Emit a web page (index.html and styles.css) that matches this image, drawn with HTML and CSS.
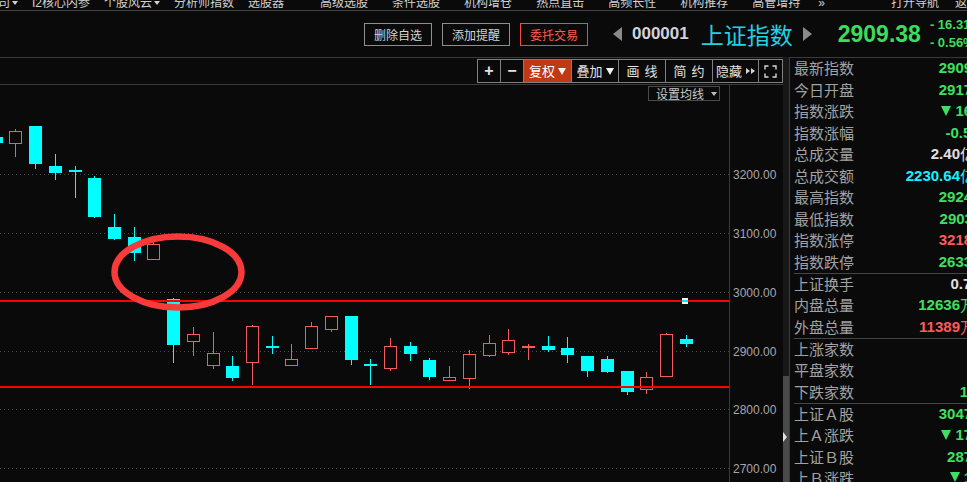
FILE: index.html
```html
<!DOCTYPE html>
<html lang="zh">
<head>
<meta charset="utf-8">
<title>上证指数</title>
<link rel="stylesheet" href="styles.css">
</head>
<body>
<div class="app">
  <nav class="nav">
    <div class="nav-g g1">
      <span class="ni">司<i class="dd"></i></span>
      <span class="ni">I2核心内参</span>
      <span class="ni">个股风云<i class="dd"></i></span>
      <span class="ni">分析师指数</span>
      <span class="ni">选股器</span>
    </div>
    <div class="nav-g g2">
      <span class="ni">高级选股</span>
      <span class="ni">条件选股</span>
      <span class="ni">机构增仓</span>
      <span class="ni">热点直击</span>
      <span class="ni">高频长性</span>
      <span class="ni">机构推荐</span>
      <span class="ni">高管增持</span>
    </div>
    <div class="nav-g more"><span class="ni">»</span></div>
    <div class="nav-g g3">
      <span class="ni">打开导航</span>
      <span class="ni">返回</span>
    </div>
  </nav>

  <header class="quote">
    <div class="btns">
      <button type="button" class="btn">删除自选</button>
      <button type="button" class="btn">添加提醒</button>
      <button type="button" class="btn red">委托交易</button>
    </div>
    <span class="arr l"></span>
    <span class="code">000001</span>
    <span class="name">上证指数</span>
    <span class="arr r"></span>
    <span class="price">2909.38</span>
    <div class="chg">
      <div>- 16.31</div>
      <div>- 0.56%</div>
    </div>
  </header>

  <div class="main">
    <section class="left">
      <div class="toolrow">
        <div class="tools">
          <span class="tc w22 sym">+</span>
          <span class="tc w22 sym">−</span>
          <span class="tc w47 on">复权<i class="tri"></i></span>
          <span class="tc w46">叠加<i class="tri"></i></span>
          <span class="tc w46 sp">画 线</span>
          <span class="tc w46 sp">简 约</span>
          <span class="tc w45">隐藏<i class="rt"></i><i class="rt"></i></span>
          <span class="tc w23">
            <svg width="13" height="13" viewBox="0 0 13 13" fill="none" stroke="#d6d6d6" stroke-width="1.4"><path d="M1 4.5V1h3.5M8.5 1H12v3.5M12 8.5V12H8.5M4.5 12H1V8.5"/></svg>
          </span>
        </div>
      </div>
      <div class="chart">
        <svg class="plot" width="783" height="397" viewBox="0 85 783 397">
          <g stroke="#4a4a4a" stroke-dasharray="1 3" shape-rendering="crispEdges">
            <line x1="0" y1="174.5" x2="729" y2="174.5"/>
            <line x1="0" y1="233.5" x2="729" y2="233.5"/>
            <line x1="0" y1="292.5" x2="729" y2="292.5"/>
            <line x1="0" y1="351.5" x2="729" y2="351.5"/>
            <line x1="0" y1="409.5" x2="729" y2="409.5"/>
            <line x1="0" y1="468.5" x2="729" y2="468.5"/>
          </g>
          <line x1="729.5" y1="85" x2="729.5" y2="482" stroke="#3a3a3a"/>
          <g font-family="Liberation Sans, Arial, sans-serif" font-size="12" fill="#a6a6ae">
            <text x="733" y="179">3200.00</text>
            <text x="733" y="238">3100.00</text>
            <text x="733" y="297">3000.00</text>
            <text x="733" y="356">2900.00</text>
            <text x="733" y="414">2800.00</text>
            <text x="733" y="473">2700.00</text>
          </g>
          <g fill="#00ffff" shape-rendering="crispEdges">
            <rect x="-10" y="137" width="13" height="6"/>
            <rect x="35" y="126" width="1" height="43"/><rect x="29" y="126" width="13" height="38"/>
            <rect x="55" y="154" width="1" height="26"/><rect x="49" y="166" width="13" height="7"/>
            <rect x="75" y="166" width="1" height="32"/><rect x="69" y="170" width="13" height="2"/>
            <rect x="94" y="176" width="1" height="42"/><rect x="88" y="178" width="13" height="39"/>
            <rect x="114" y="214" width="1" height="26"/><rect x="108" y="227" width="13" height="12"/>
            <rect x="134" y="227" width="1" height="34"/><rect x="128" y="237" width="13" height="16"/>
            <rect x="173" y="298" width="1" height="65"/><rect x="167" y="299" width="13" height="46"/>
            <rect x="232" y="356" width="1" height="25"/><rect x="226" y="366" width="13" height="12"/>
            <rect x="272" y="336" width="1" height="18"/><rect x="266" y="346" width="13" height="2"/>
            <rect x="351" y="316" width="1" height="49"/><rect x="345" y="316" width="13" height="44"/>
            <rect x="370" y="359" width="1" height="26"/><rect x="364" y="364" width="13" height="2"/>
            <rect x="410" y="342" width="1" height="19"/><rect x="404" y="346" width="13" height="8"/>
            <rect x="429" y="358" width="1" height="22"/><rect x="423" y="360" width="13" height="17"/>
            <rect x="548" y="336" width="1" height="16"/><rect x="542" y="346" width="13" height="4"/>
            <rect x="567" y="337" width="1" height="26"/><rect x="561" y="348" width="13" height="7"/>
            <rect x="587" y="356" width="1" height="21"/><rect x="581" y="356" width="13" height="15"/>
            <rect x="607" y="356" width="1" height="17"/><rect x="601" y="359" width="13" height="13"/>
            <rect x="627" y="371" width="1" height="24"/><rect x="621" y="371" width="13" height="21"/>
            <rect x="686" y="335" width="1" height="12"/><rect x="680" y="339" width="13" height="5"/>
          </g>
          <g fill="#f25c5c" shape-rendering="crispEdges">
            <rect x="15" y="129" width="1" height="28"/>
            <rect x="153" y="241" width="1" height="19"/>
            <rect x="193" y="327" width="1" height="29"/>
            <rect x="213" y="332" width="1" height="37"/>
            <rect x="252" y="325" width="1" height="60"/>
            <rect x="291" y="344" width="1" height="22"/>
            <rect x="311" y="322" width="1" height="27"/>
            <rect x="331" y="316" width="1" height="16"/>
            <rect x="390" y="338" width="1" height="33"/>
            <rect x="449" y="366" width="1" height="15"/>
            <rect x="469" y="350" width="1" height="39"/>
            <rect x="489" y="335" width="1" height="22"/>
            <rect x="508" y="329" width="1" height="26"/>
            <rect x="528" y="344" width="1" height="16"/><rect x="522" y="346" width="13" height="2"/>
            <rect x="646" y="372" width="1" height="22"/>
            <rect x="666" y="333" width="1" height="44"/>
          </g>
          <g fill="#0a0a0a" stroke="#f25c5c" stroke-width="1">
            <rect x="9.5" y="131.5" width="12" height="12"/>
            <rect x="147.5" y="244.5" width="12" height="15"/>
            <rect x="187.5" y="334.5" width="12" height="7"/>
            <rect x="207.5" y="353.5" width="12" height="12"/>
            <rect x="246.5" y="326.5" width="12" height="36"/>
            <rect x="285.5" y="359.5" width="12" height="6"/>
            <rect x="305.5" y="326.5" width="12" height="22"/>
            <rect x="325.5" y="316.5" width="12" height="13"/>
            <rect x="384.5" y="346.5" width="12" height="22"/>
            <rect x="443.5" y="377.5" width="12" height="3"/>
            <rect x="463.5" y="354.5" width="12" height="24"/>
            <rect x="483.5" y="343.5" width="12" height="12"/>
            <rect x="502.5" y="340.5" width="12" height="12"/>
            <rect x="640.5" y="377.5" width="12" height="12"/>
            <rect x="660.5" y="334.5" width="12" height="42"/>
          </g>
          <g fill="#ff0000" shape-rendering="crispEdges">
            <rect x="0" y="300" width="729" height="2"/>
            <rect x="0" y="386" width="729" height="2"/>
          </g>
          <rect x="682" y="298" width="6" height="6" fill="#f4f4f4" shape-rendering="crispEdges"/>
          <rect x="682" y="300" width="6" height="2" fill="#00e8ff" shape-rendering="crispEdges"/>
          <ellipse cx="178" cy="272" rx="63.5" ry="35.5" fill="none" stroke="#f83a3a" stroke-width="6.5"/>
        </svg>
        <div class="ma">设置均线<i></i></div>
      </div>
    </section>

    <div class="scroll"><div class="thumb"><i></i></div></div>

    <aside class="panel">
      <div class="grp">
        <div class="row"><span class="lb">最新指数</span><span class="v gr">2909.38</span></div>
        <div class="row"><span class="lb">今日开盘</span><span class="v gr">2917.23</span></div>
        <div class="row"><span class="lb">指数涨跌</span><span class="v gr"><i class="dn"></i>16.31</span></div>
        <div class="row"><span class="lb">指数涨幅</span><span class="v gr">-0.56%</span></div>
        <div class="row"><span class="lb">总成交量</span><span class="v wh unit">2.40<span class="u">亿</span></span></div>
        <div class="row"><span class="lb">总成交额</span><span class="v cy unit">2230.64<span class="u">亿</span></span></div>
        <div class="row"><span class="lb">最高指数</span><span class="v gr">2924.12</span></div>
        <div class="row"><span class="lb">最低指数</span><span class="v gr">2903.11</span></div>
        <div class="row"><span class="lb">指数涨停</span><span class="v rd">3218.26</span></div>
        <div class="row"><span class="lb">指数跌停</span><span class="v gr">2633.12</span></div>
      </div>
      <div class="grp s">
        <div class="row"><span class="lb">上证换手</span><span class="v wh">0.73%</span></div>
        <div class="row"><span class="lb">内盘总量</span><span class="v gr unit">12636<span class="u">万</span></span></div>
        <div class="row"><span class="lb">外盘总量</span><span class="v rd unit">11389<span class="u">万</span></span></div>
      </div>
      <div class="grp s">
        <div class="row"><span class="lb">上涨家数</span><span class="v rd">478</span></div>
        <div class="row"><span class="lb">平盘家数</span><span class="v wh">62</span></div>
        <div class="row"><span class="lb">下跌家数</span><span class="v gr">1532</span></div>
      </div>
      <div class="grp s last">
        <div class="row"><span class="lb">上证Ａ股</span><span class="v gr">3047.68</span></div>
        <div class="row"><span class="lb">上Ａ涨跌</span><span class="v gr"><i class="dn"></i>17.09</span></div>
        <div class="row"><span class="lb">上证Ｂ股</span><span class="v gr">287.92</span></div>
        <div class="row"><span class="lb">上Ｂ涨跌</span><span class="v gr"><i class="dn"></i>1.35</span></div>
      </div>
    </aside>
  </div>
</div>
</body>
</html>
```
FILE: styles.css
```css
* { box-sizing: border-box; margin: 0; padding: 0; }
html, body { width: 967px; height: 482px; overflow: hidden; background: #0a0a0a; }
body {
  font-family: "Noto Sans CJK SC", "Liberation Sans", sans-serif;
  color: #cccccc;
}
.app { width: 967px; height: 482px; overflow: hidden; }

/* top navigation (clipped at the top) */
.nav {
  height: 11px;
  border-bottom: 1px solid #454545;
  display: flex;
  overflow: hidden;
  white-space: nowrap;
  font-family: "Liberation Sans", "Noto Sans CJK SC", sans-serif;
  font-size: 12px;
  line-height: 12px;
  color: #d2d2d2;
}
.nav-g { display: flex; margin-top: -4px; flex: none; }
.g1 { gap: 14px; margin-left: -2px; }
.g2 { gap: 24px; margin-left: 36px; }
.more { margin-left: 18px; }
.g3 { gap: 16px; margin-left: 66px; }
.ni { display: flex; align-items: center; }
.dd {
  display: inline-block;
  margin-left: 2px;
  border-left: 3px solid transparent;
  border-right: 3px solid transparent;
  border-top: 4px solid #d2d2d2;
}

/* quote header */
.quote {
  height: 46px;
  display: flex;
  align-items: center;
  padding-left: 364px;
  white-space: nowrap;
}
.btns { display: flex; gap: 10px; flex: none; }
.btn {
  width: 68px;
  height: 23px;
  border: 1px solid #8e8e8e;
  background: transparent;
  color: #d4d4d4;
  font-family: "Noto Sans CJK SC", sans-serif;
  font-size: 12px;
  line-height: 21px;
  text-align: center;
}
.btn.red { border-color: #f04a44; color: #ff5a4e; }
.arr { flex: none; width: 0; height: 0; border-top: 7px solid transparent; border-bottom: 7px solid transparent; }
.arr.l { border-right: 9px solid #8a8a8a; margin-left: 25px; }
.arr.r { border-left: 9px solid #8a8a8a; margin-left: 10px; }
.code {
  margin-left: 10px;
  font-family: "Liberation Sans", sans-serif;
  font-weight: bold;
  font-size: 17px;
  color: #d2d2da;
}
.name { margin-left: 12px; font-size: 23px; line-height: 30px; color: #1fd3e4; }
.price {
  margin-left: 26px;
  font-family: "Liberation Sans", sans-serif;
  font-weight: bold;
  font-size: 23px;
  color: #3cdc5c;
}
.chg {
  margin-left: 9px;
  font-family: "Liberation Sans", sans-serif;
  font-weight: bold;
  font-size: 13px;
  line-height: 18px;
  color: #3cdc5c;
}

/* main area */
.main { display: flex; height: 425px; }
.left {
  width: 783px;
  flex: none;
  border-top: 1px solid #3a3a3a;
  display: flex;
  flex-direction: column;
}
.toolrow {
  height: 27px;
  border-bottom: 1px solid #3a3a3a;
  display: flex;
  justify-content: flex-end;
  align-items: flex-start;
  padding-top: 1px;
}
.tools {
  display: flex;
  height: 24px;
  border: 1px solid #808080;
}
.tc {
  display: flex;
  align-items: center;
  justify-content: center;
  height: 22px;
  border-left: 1px solid #808080;
  font-size: 13px;
  line-height: 22px;
  color: #e2e2e2;
  white-space: nowrap;
}
.tc:first-child { border-left: 0; }
.w22 { width: 22px; }
.tc.w22 + .tc.w22 { width: 23px; }
.w47 { width: 48px; }
.w46 { width: 47px; }
.w45 { width: 46px; }
.w23 { width: 24px; }
.sym { font-family: "Liberation Sans", sans-serif; font-weight: bold; font-size: 16px; }
.sp { word-spacing: 2px; }
.on { background: #c03814; color: #ffffff; }
.tri {
  display: inline-block;
  margin-left: 3px;
  border-left: 4px solid transparent;
  border-right: 4px solid transparent;
  border-top: 7px solid #f2f2f2;
}
.rt {
  display: inline-block;
  border-top: 3.5px solid transparent;
  border-bottom: 3.5px solid transparent;
  border-left: 4px solid #d6d6d6;
}
.rt:first-of-type { margin-left: 4px; margin-right: 1px; }

.chart { position: relative; flex: 1; overflow: hidden; }
.plot { display: block; }
.ma {
  position: absolute;
  left: 648px;
  top: 1px;
  width: 72px;
  height: 15px;
  border: 1px solid #4a4a4a;
  padding-left: 7px;
  font-size: 12px;
  line-height: 13px;
  color: #cacaca;
  display: flex;
  align-items: center;
  white-space: nowrap;
}
.ma i {
  display: inline-block;
  margin-left: 7px;
  border-left: 3px solid transparent;
  border-right: 3px solid transparent;
  border-top: 4px solid #bdbdbd;
}

/* scrollbar */
.scroll {
  width: 6px;
  flex: none;
  background: #181818;
  display: flex;
  flex-direction: column;
  justify-content: flex-end;
}
.thumb { height: 106px; background: #4a4a4a; padding-top: 56px; }
.thumb i {
  display: block;
  width: 0;
  height: 0;
  border-top: 5px solid transparent;
  border-bottom: 5px solid transparent;
  border-left: 4px solid #e2e2e2;
}

/* quote panel */
.panel {
  width: 206px;
  flex: none;
  border-left: 1px solid #3a3a3a;
  border-top: 1px solid #3a3a3a;
  padding: 0 2px 0 4px;
}
.grp { border-bottom: 1px solid #444444; }
.grp.last { border-bottom: 0; }
.row {
  display: flex;
  justify-content: space-between;
  align-items: center;
  height: 21.5px;
  padding-bottom: 2px;
  white-space: nowrap;
}
.grp.s .row { height: 21.3px; }
.lb { font-size: 15px; line-height: 15px; color: #a2a2a2; }
.v {
  display: flex;
  align-items: center;
  font-family: "Liberation Sans", "Noto Sans CJK SC", sans-serif;
  font-weight: bold;
  font-size: 15px;
  line-height: 15px;
}
.v.unit { padding-right: 18px; }
.v .u { font-family: "Noto Sans CJK SC", sans-serif; font-weight: normal; }
.dn {
  display: inline-block;
  margin-right: 4px;
  border-left: 5px solid transparent;
  border-right: 5px solid transparent;
  border-top: 10px solid currentColor;
}
.gr { color: #3ee060; }
.rd { color: #ff5a5a; }
.cy { color: #10f4ff; }
.wh { color: #e0e0e0; }
```
